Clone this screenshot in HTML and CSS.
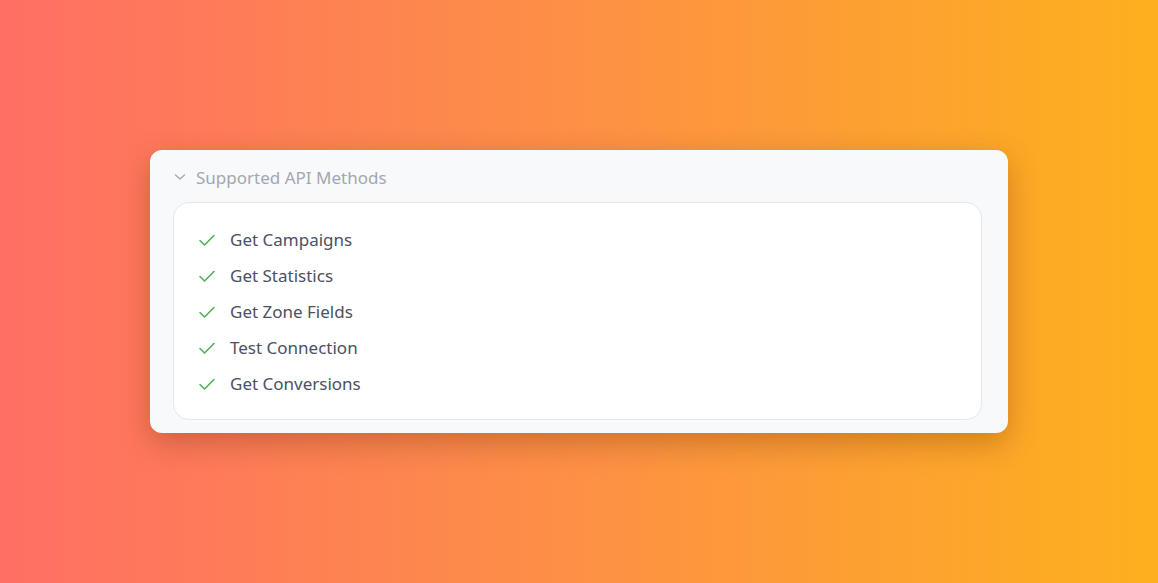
FILE: index.html
```html
<!DOCTYPE html>
<html lang="en">
<head>
    <meta charset="UTF-8">
    <meta name="viewport" content="width=device-width, initial-scale=1.0">
    <title>Supported API Methods</title>
    <link rel="stylesheet" href="styles.css">
</head>
<body>
    <div class="panel">
        <div class="panel-header">
            <svg class="chevron" width="12" height="12" viewBox="0 0 12 12">
                <path d="M1.5 4 L6 8 L10.5 4" fill="none" stroke="#a3a7b0" stroke-width="1.4" stroke-linecap="round" stroke-linejoin="round"/>
            </svg>
            <span>Supported API Methods</span>
        </div>
        <ul class="methods">
            <li><svg class="check" width="18" height="18" viewBox="0 0 18 18"><path d="M2 9.5 L6.5 14 L16 4.5" fill="none" stroke="#54ad5a" stroke-width="1.6" stroke-linecap="round" stroke-linejoin="round"/></svg>Get Campaigns</li>
            <li><svg class="check" width="18" height="18" viewBox="0 0 18 18"><path d="M2 9.5 L6.5 14 L16 4.5" fill="none" stroke="#54ad5a" stroke-width="1.6" stroke-linecap="round" stroke-linejoin="round"/></svg>Get Statistics</li>
            <li><svg class="check" width="18" height="18" viewBox="0 0 18 18"><path d="M2 9.5 L6.5 14 L16 4.5" fill="none" stroke="#54ad5a" stroke-width="1.6" stroke-linecap="round" stroke-linejoin="round"/></svg>Get Zone Fields</li>
            <li><svg class="check" width="18" height="18" viewBox="0 0 18 18"><path d="M2 9.5 L6.5 14 L16 4.5" fill="none" stroke="#54ad5a" stroke-width="1.6" stroke-linecap="round" stroke-linejoin="round"/></svg>Test Connection</li>
            <li><svg class="check" width="18" height="18" viewBox="0 0 18 18"><path d="M2 9.5 L6.5 14 L16 4.5" fill="none" stroke="#54ad5a" stroke-width="1.6" stroke-linecap="round" stroke-linejoin="round"/></svg>Get Conversions</li>
        </ul>
    </div>
</body>
</html>
```

FILE: styles.css
```css
* {
    margin: 0;
    padding: 0;
    box-sizing: border-box;
}

body {
    width: 1158px;
    height: 583px;
    overflow: hidden;
    font-family: "Noto Sans", "Open Sans", sans-serif;
    background: linear-gradient(to right, #ff6f64 0%, #fd9045 50%, #fdb01e 100%);
    padding: 150px 150px 0 150px;
}

.panel {
    width: 858px;
    height: 283px;
    background-color: #f8f9fb;
    border-radius: 12px;
    box-shadow: 0 10px 30px rgba(90, 40, 0, 0.3);
    padding: 0 26px 14px 23px;
}

.panel-header {
    display: flex;
    align-items: center;
    height: 52px;
    padding-top: 2px;
    color: #a3a7b0;
    font-size: 17px;
}

.chevron {
    margin: 0 10px 0 1px;
}

.methods {
    list-style: none;
    background: white;
    border: 1px solid #e5e7eb;
    border-radius: 16px;
    padding: 18px 24px 18px 24px;
}

.methods li {
    display: flex;
    align-items: center;
    height: 36px;
    color: #4b5160;
    font-size: 17px;
}

.check {
    margin-right: 14px;
    margin-top: 2px;
}
```
